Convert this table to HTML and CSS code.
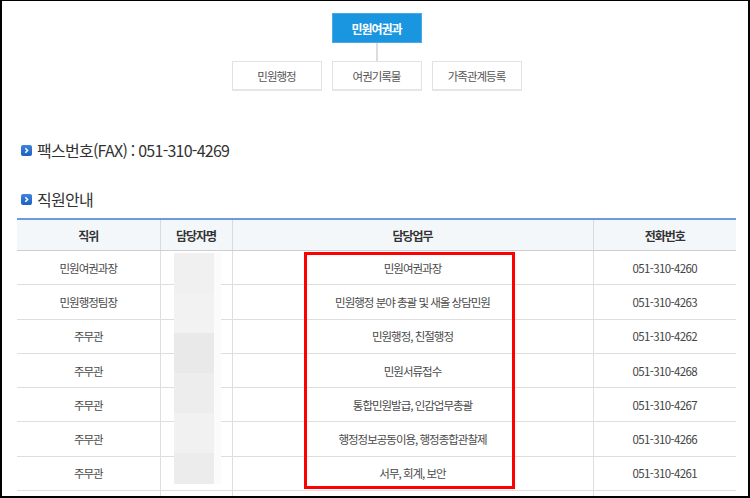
FILE: index.html
```html
<!DOCTYPE html>
<html lang="ko">
<head>
<meta charset="utf-8">
<link rel="stylesheet" href="styles.css">
</head>
<body>
<div class="frame">
  <div class="content">
    <div class="org">
      <div class="org-top">민원여권과</div>
      <div class="org-line"></div>
      <div class="org-subs">
        <div class="org-sub">민원행정</div>
        <div class="org-sub">여권기록물</div>
        <div class="org-sub">가족관계등록</div>
      </div>
    </div>

    <h3 class="heading heading-fax"><span class="bullet"><svg viewBox="0 0 11 11" width="11" height="11"><path d="M4.3 3.2 L6.6 5.5 L4.3 7.8" fill="none" stroke="#fff" stroke-width="1.5"/></svg></span>팩스번호(FAX) : 051-310-4269</h3>

    <h3 class="heading heading-staff"><span class="bullet"><svg viewBox="0 0 11 11" width="11" height="11"><path d="M4.3 3.2 L6.6 5.5 L4.3 7.8" fill="none" stroke="#fff" stroke-width="1.5"/></svg></span>직원안내</h3>

    <div class="table-wrap">
      <table class="staff">
        <colgroup>
          <col class="c1"><col class="c2"><col class="c3"><col class="c4">
        </colgroup>
        <thead>
          <tr><th>직위</th><th>담당자명</th><th>담당업무</th><th>전화번호</th></tr>
        </thead>
        <tbody>
          <tr><td>민원여권과장</td><td></td><td>민원여권과장</td><td class="tel">051-310-4260</td></tr>
          <tr><td>민원행정팀장</td><td></td><td>민원행정 분야 총괄 및 새올 상담민원</td><td class="tel">051-310-4263</td></tr>
          <tr><td>주무관</td><td></td><td>민원행정, 친절행정</td><td class="tel">051-310-4262</td></tr>
          <tr><td>주무관</td><td></td><td>민원서류접수</td><td class="tel">051-310-4268</td></tr>
          <tr><td>주무관</td><td></td><td>통합민원발급, 인감업무총괄</td><td class="tel">051-310-4267</td></tr>
          <tr><td>주무관</td><td></td><td>행정정보공동이용, 행정종합관찰제</td><td class="tel">051-310-4266</td></tr>
          <tr><td>주무관</td><td></td><td>서무, 회계, 보안</td><td class="tel">051-310-4261</td></tr>
          <tr><td></td><td></td><td></td><td></td></tr>
        </tbody>
      </table>
      <div class="redact">
        <div class="redact-col">
          <span class="seg s1"></span>
          <span class="seg s2"></span>
          <span class="seg s3"></span>
          <span class="seg s4"></span>
          <span class="seg s5"></span>
          <span class="seg s6"></span>
        </div>
        <div class="redact-edge"></div>
      </div>
      <div class="highlight"></div>
    </div>
  </div>
</div>
</body>
</html>
```

FILE: styles.css
```css
html, body {
  margin: 0;
  padding: 0;
  background: #fff;
}
body {
  font-family: "Noto Sans CJK KR", "Noto Sans", sans-serif;
  color: #555;
}
.frame {
  box-sizing: border-box;
  width: 750px;
  height: 498px;
  border-style: solid;
  border-color: #000;
  border-width: 1px 2px 2px 2px;
  overflow: hidden;
}
.content {
  margin-left: 15px;
  width: 719px;
}
.org {
  display: flex;
  flex-direction: column;
  align-items: center;
  padding-top: 12px;
}
.org-top {
  box-sizing: border-box;
  width: 90px;
  height: 30px;
  background: #1996df;
  border: 1px solid #4aa9e6;
  color: #fff;
  font-size: 12px;
  font-weight: bold;
  letter-spacing: -1px;
  display: flex;
  align-items: center;
  justify-content: center;
}
.org-line {
  width: 2px;
  height: 18px;
  background: #dcdcdc;
}
.org-subs {
  display: flex;
  gap: 10px;
}
.org-sub {
  box-sizing: border-box;
  width: 90px;
  height: 30px;
  border: 1px solid #e2e2e2;
  border-bottom: 2px solid #e6e6e6;
  color: #555;
  font-size: 11.5px;
  letter-spacing: -1px;
  display: flex;
  align-items: center;
  justify-content: center;
}
.heading {
  display: flex;
  align-items: center;
  margin: 0;
  font-size: 16px;
  font-weight: normal;
  color: #333;
  letter-spacing: -0.75px;
  height: 20px;
  margin-left: 4px;
}
.heading-fax {
  margin-top: 49px;
}
.heading-staff {
  margin-top: 29px;
}
.bullet {
  width: 11px;
  height: 11px;
  border-radius: 2px;
  background: linear-gradient(#3d85dd, #1e5fc0);
  margin-right: 5px;
  display: flex;
  flex: none;
}
.table-wrap {
  position: relative;
  margin-top: 9px;
}
.staff {
  width: 719px;
  border-collapse: collapse;
  table-layout: fixed;
  font-size: 11.5px;
  letter-spacing: -1px;
}
.c1 { width: 143px; }
.c2 { width: 72px; }
.c3 { width: 361px; }
.c4 { width: 143px; }
.staff th {
  height: 30px;
  padding: 0;
  border-top: 2px solid #6b9bd8;
  border-bottom: 1px solid #cfcfcf;
  border-left: 1px solid #dadada;
  background: #f4f7fa;
  color: #333;
  font-weight: bold;
  font-size: 12px;
}
.staff th:first-child { border-left: none; }
.staff td {
  height: 33.3px;
  padding: 0;
  text-align: center;
  border-bottom: 1px solid #dedede;
  border-left: 1px solid #dedede;
  color: #4a4a4a;
}
.staff td:first-child { border-left: none; }
.staff td.tel { color: #444; letter-spacing: -0.6px; }
.redact {
  position: absolute;
  left: 157px;
  top: 35px;
  height: 231px;
  display: flex;
}
.redact-col {
  width: 40px;
  display: flex;
  flex-direction: column;
}
.seg { display: block; height: 40px; flex: none; }
.s1 { background: #f0f0f0; }
.s2 { background: #f2f2f2; }
.s3 { background: #e9e9e9; }
.s4 { background: #ededed; }
.s5 { background: #f1f1f1; }
.s6 { background: #ececec; height: 31px; }
.redact-edge {
  width: 7px;
  background: #fbfbfb;
}
.highlight {
  position: absolute;
  left: 287px;
  top: 34px;
  width: 211px;
  height: 237px;
  box-sizing: border-box;
  border: 3px solid #ff0000;
}
```
